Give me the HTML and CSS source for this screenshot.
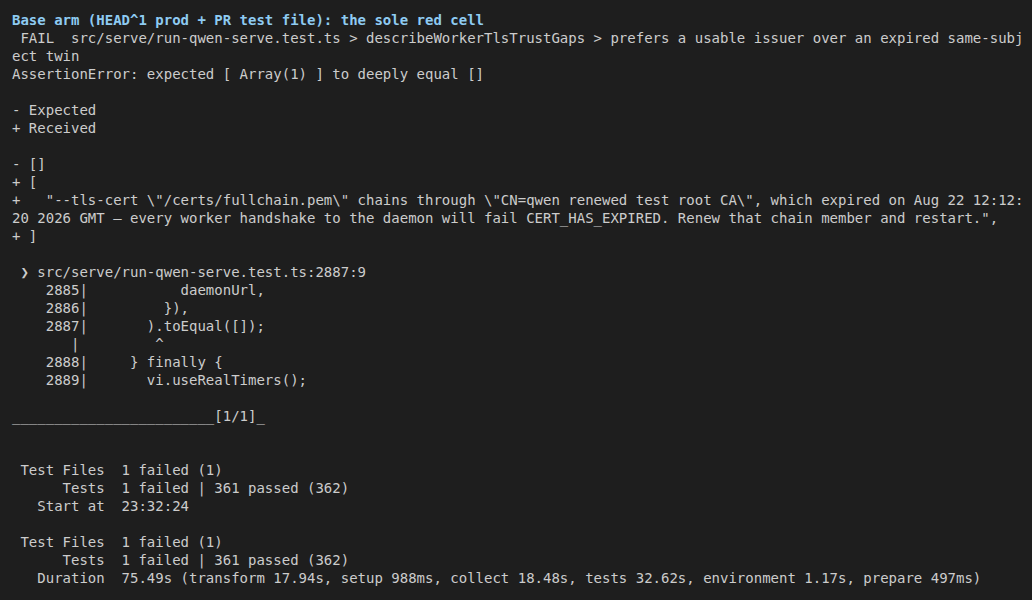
FILE: index.html
```html
<!DOCTYPE html>
<html>
<head>
<meta charset="utf-8">
<link rel="stylesheet" href="styles.css">
</head>
<body>
<main class="term">
<pre class="out"><span class="title">Base arm (HEAD^1 prod + PR test file): the sole red cell</span>
 FAIL  src/serve/run-qwen-serve.test.ts &gt; describeWorkerTlsTrustGaps &gt; prefers a usable issuer over an expired same-subj
ect twin
AssertionError: expected [ Array(1) ] to deeply equal []

- Expected
+ Received

- []
+ [
+   "--tls-cert \"/certs/fullchain.pem\" chains through \"CN=qwen renewed test root CA\", which expired on Aug 22 12:12:
20 2026 GMT — every worker handshake to the daemon will fail CERT_HAS_EXPIRED. Renew that chain member and restart.",
+ ]

 ❯ src/serve/run-qwen-serve.test.ts:2887:9
    2885|           daemonUrl,
    2886|         }),
    2887|       ).toEqual([]);
       |         ^
    2888|     } finally {
    2889|       vi.useRealTimers();

________________________[1/1]_


 Test Files  1 failed (1)
      Tests  1 failed | 361 passed (362)
   Start at  23:32:24

 Test Files  1 failed (1)
      Tests  1 failed | 361 passed (362)
   Duration  75.49s (transform 17.94s, setup 988ms, collect 18.48s, tests 32.62s, environment 1.17s, prepare 497ms)</pre>
</main>
</body>
</html>
```
FILE: styles.css
```css
html, body {
  margin: 0;
  padding: 0;
  background: #1e1e1e;
  height: 100%;
  overflow: hidden;
}
.term {
  padding: 11px 12px 0 12px;
}
.out {
  margin: 0;
  font-family: "DejaVu Sans Mono", monospace;
  font-size: 14px;
  line-height: 18px;
  color: #cccccc;
  white-space: pre;
}
.title {
  color: #8ecbf2;
  font-weight: bold;
}
```
